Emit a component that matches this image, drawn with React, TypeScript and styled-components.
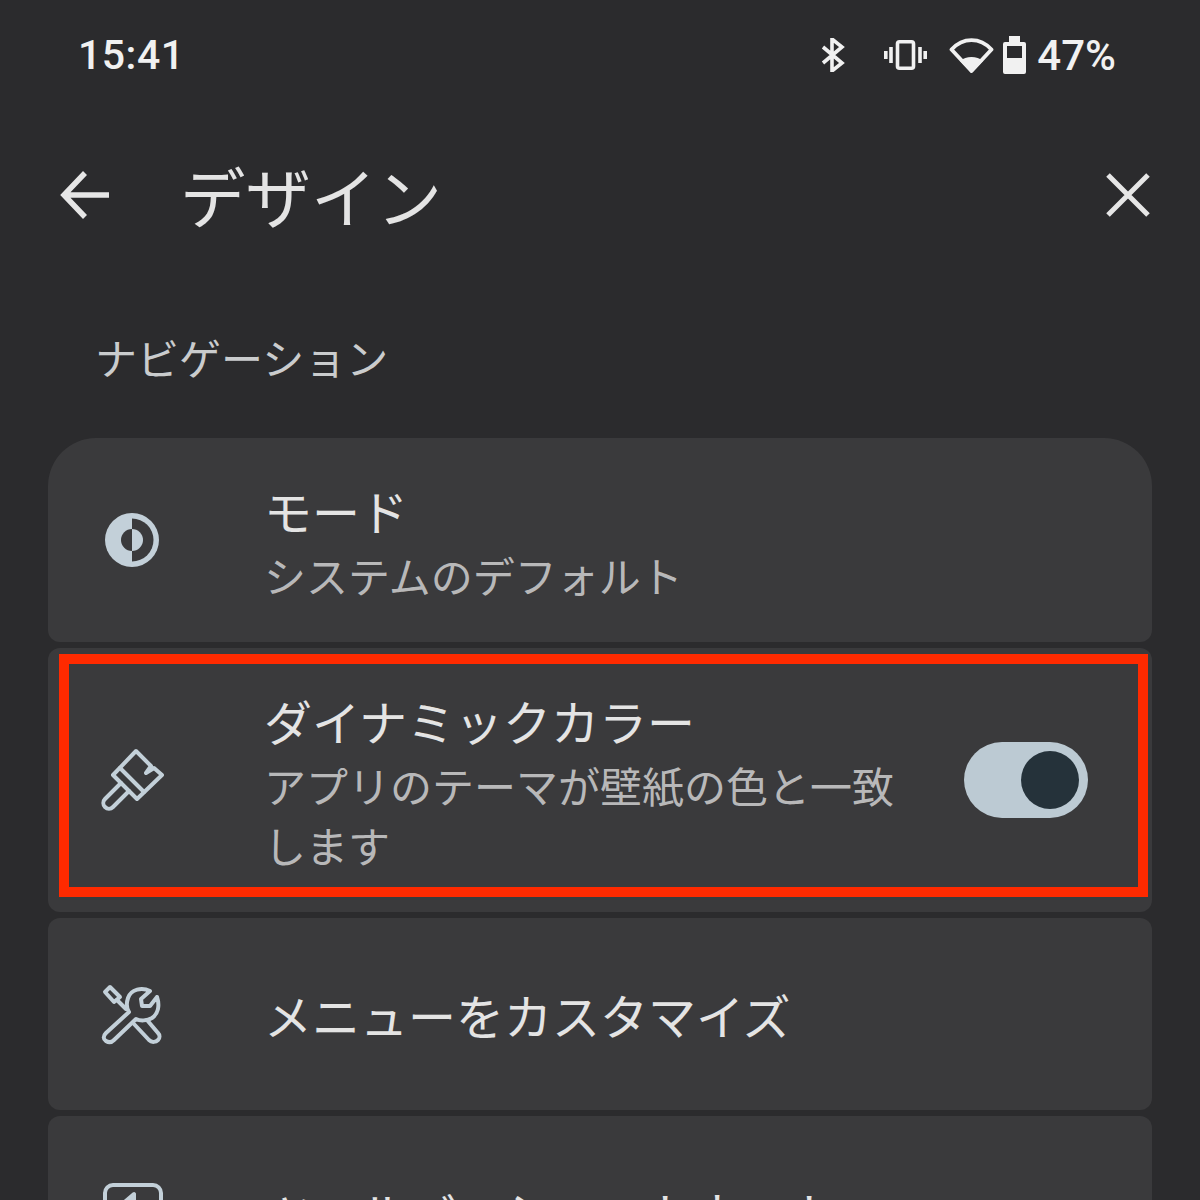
import styled, { createGlobalStyle } from 'styled-components';

const JP = `"Noto Sans CJK JP", "Noto Sans", sans-serif`;
const ICON = '#c3d0d9';

const GlobalStyle = createGlobalStyle`
  html, body {
    margin: 0;
    padding: 0;
    background: #2b2b2d;
  }
`;

function ModeIcon() {
  return (
    <svg width="64" height="64" viewBox="0 0 64 64">
      <circle cx="32" cy="32" r="27" fill={ICON} />
      <path d="M32 10.5a21.5 21.5 0 0 1 0 43z" fill="#3a3a3c" />
      <path d="M32 21a11 11 0 0 0 0 22z" fill="#3a3a3c" />
      <path d="M32 21a11 11 0 0 1 0 22z" fill={ICON} />
    </svg>
  );
}

function BrushIcon() {
  return (
    <svg width="64" height="64" viewBox="0 0 64 64" fill="none" stroke={ICON} strokeWidth="4" strokeLinejoin="round" strokeLinecap="round">
      <path d="M36 3 L51 18 L46 25 L54 20 L62 27 L37 51 L13 27 Z" />
      <path d="M20 20 L44 44" />
      <path d="M21 35 L5 51 a5.6 5.6 0 0 0 8 8 L29 43" />
    </svg>
  );
}

function ToolsIcon() {
  return (
    <svg width="64" height="64" viewBox="0 0 64 64" fill="none" stroke={ICON} strokeWidth="4" strokeLinejoin="round" strokeLinecap="round">
      <path d="M10 5 L5 10 L14 20 L20 15 Z" />
      <path d="M17 18 L26 27" />
      <path d="M50 9 C42 5 31 7 28 16 C26 22 27 27 29 30 L6 51 C3 54 3 57 6 59 C9 61 12 60 14 58 L36 37 C40 39 47 39 52 36 C58 32 60 24 57 15 L50 24 L42 24 L41 17 Z" />
      <path d="M34 42 L49 58 C52 61 56 60 58 58 C60 56 60 53 58 51 L47 38" />
    </svg>
  );
}

function ToolbarIcon() {
  return (
    <svg width="64" height="64" viewBox="0 0 64 64" fill="none" stroke={ICON} strokeWidth="4" strokeLinejoin="round">
      <rect x="5" y="5" width="56" height="54" rx="8" />
      <path d="M34 14 L34 38 L20 26 Z" fill={ICON} />
    </svg>
  );
}

export default function App() {
  return (
    <Page>
      <GlobalStyle />
      <StatusBar>
        <Clock>15:41</Clock>
        <StatusIcons>
          <StatusIcon $gap={0} width="26" height="34" viewBox="0 0 26 34" fill="none" stroke="#f1f1f1" strokeWidth="3.6">
            <path d="M3 9 L22 25 L12 33 V1 L22 9 L3 25" />
          </StatusIcon>
          <StatusIcon $gap={38} width="43" height="30" viewBox="0 0 43 30" fill="none" stroke="#f1f1f1" strokeWidth="3.6">
            <rect x="13.5" y="1.8" width="16" height="26.4" rx="2" />
            <path d="M7 7 V23 M1.8 11 V19 M36 7 V23 M41.2 11 V19" />
          </StatusIcon>
          <StatusIcon $gap={22} width="45" height="37" viewBox="0 0 45 37" fill="none" stroke="#f1f1f1" strokeWidth="3.8" strokeLinejoin="round">
            <path d="M22.5 34 L2.5 12.5 C14 -0 31 -0 42.5 12.5 Z" />
            <path d="M22.5 36 L11 24 C17 18.5 28 18.5 34 24 Z" fill="#f1f1f1" stroke="none" />
          </StatusIcon>
          <StatusIcon $gap={9} width="23" height="38" viewBox="0 0 23 38">
            <path fillRule="evenodd" fill="#f1f1f1" d="M6 0 H17 V6 H21 a2 2 0 0 1 2 2 V36 a2 2 0 0 1 -2 2 H2 a2 2 0 0 1 -2 -2 V8 a2 2 0 0 1 2 -2 H6 Z M4 10 V22 H19 V10 Z" />
          </StatusIcon>
          <Percent>47%</Percent>
        </StatusIcons>
      </StatusBar>

      <Header>
        <svg width="50" height="50" viewBox="0 0 50 50" fill="none" stroke="#e6e6e6" strokeWidth="5.5">
          <path d="M25 3 L4 25 L25 47 M4 25 H49" />
        </svg>
        <Title>デザイン</Title>
        <CloseIcon width="44" height="44" viewBox="0 0 44 44" fill="none" stroke="#e6e6e6" strokeWidth="5">
          <path d="M2 2 L42 42 M42 2 L2 42" />
        </CloseIcon>
      </Header>

      <SectionTitle>ナビゲーション</SectionTitle>

      <List>
        <Card $height={204} $first>
          <IconSlot><ModeIcon /></IconSlot>
          <TextBlock>
            <RowTitle>モード</RowTitle>
            <RowSub>システムのデフォルト</RowSub>
          </TextBlock>
        </Card>
        <Card $height={264}>
          <IconSlot><BrushIcon /></IconSlot>
          <TextBlock $narrow>
            <RowTitle>ダイナミックカラー</RowTitle>
            <RowSub>アプリのテーマが壁紙の色と一致します</RowSub>
          </TextBlock>
          <Toggle><Knob /></Toggle>
          <Highlight />
        </Card>
        <Card $height={192}>
          <IconSlot><ToolsIcon /></IconSlot>
          <TextBlock>
            <RowTitle>メニューをカスタマイズ</RowTitle>
          </TextBlock>
        </Card>
        <Card $height={192}>
          <IconSlot><ToolbarIcon /></IconSlot>
          <TextBlock>
            <RowTitle>ツールバーショートカット</RowTitle>
          </TextBlock>
        </Card>
      </List>
    </Page>
  );
}

const Page = styled.div`
  width: 1200px;
  height: 1200px;
  overflow: hidden;
  background: #2b2b2d;
  font-family: ${JP};
`;

const StatusBar = styled.div`
  height: 110px;
  padding: 0 84px 0 78px;
  display: flex;
  align-items: center;
  justify-content: space-between;
  color: #f1f1f1;
  font-family: Roboto, sans-serif;
  font-weight: 500;
`;

const Clock = styled.div`
  font-size: 41px;
  letter-spacing: 0.5px;
`;

const StatusIcons = styled.div`
  display: flex;
  align-items: center;
`;

const StatusIcon = styled.svg<{ $gap: number }>`
  display: block;
  margin-left: ${(p) => p.$gap}px;
`;

const Percent = styled.div`
  margin-left: 11px;
  font-size: 42px;
`;

const Header = styled.div`
  height: 170px;
  padding: 0 50px 0 60px;
  display: flex;
  align-items: center;
`;

const Title = styled.h1`
  margin: 0 0 0 70px;
  font-size: 65.5px;
  font-weight: 400;
  line-height: 76px;
  color: #e4e4e4;
`;

const CloseIcon = styled.svg`
  margin-left: auto;
`;

const SectionTitle = styled.div`
  height: 152px;
  margin-bottom: 6px;
  padding-left: 95px;
  display: flex;
  align-items: center;
  font-size: 42px;
  color: #cacccd;
`;

const List = styled.div`
  padding: 0 48px;
  display: flex;
  flex-direction: column;
  gap: 6px;
`;

const Card = styled.div<{ $height: number; $first?: boolean }>`
  position: relative;
  flex: none;
  height: ${(p) => p.$height}px;
  box-sizing: border-box;
  padding: 0 64px 0 52px;
  display: flex;
  align-items: center;
  background: #3a3a3c;
  border-radius: ${(p) => (p.$first ? '48px 48px 12px 12px' : '12px')};
`;

const IconSlot = styled.div`
  flex: none;
  width: 64px;
  height: 64px;
  margin-right: 100px;
`;

const TextBlock = styled.div<{ $narrow?: boolean }>`
  flex: ${(p) => (p.$narrow ? 'none' : '1')};
  width: ${(p) => (p.$narrow ? '640px' : 'auto')};
`;

const RowTitle = styled.div`
  font-size: 48px;
  line-height: 70px;
  color: #e4e4e4;
`;

const RowSub = styled.div`
  font-size: 42px;
  line-height: 60px;
  color: #b8b8b9;
`;

const Toggle = styled.div`
  margin-left: auto;
  width: 124px;
  height: 76px;
  box-sizing: border-box;
  padding-right: 9px;
  display: flex;
  align-items: center;
  justify-content: flex-end;
  background: #bccad3;
  border-radius: 38px;
`;

const Knob = styled.div`
  width: 58px;
  height: 58px;
  border-radius: 50%;
  background: #25323a;
`;

const Highlight = styled.div`
  position: absolute;
  top: 6px;
  left: 11px;
  right: 4px;
  bottom: 15px;
  border: 10px solid #ff2a00;
  pointer-events: none;
`;
